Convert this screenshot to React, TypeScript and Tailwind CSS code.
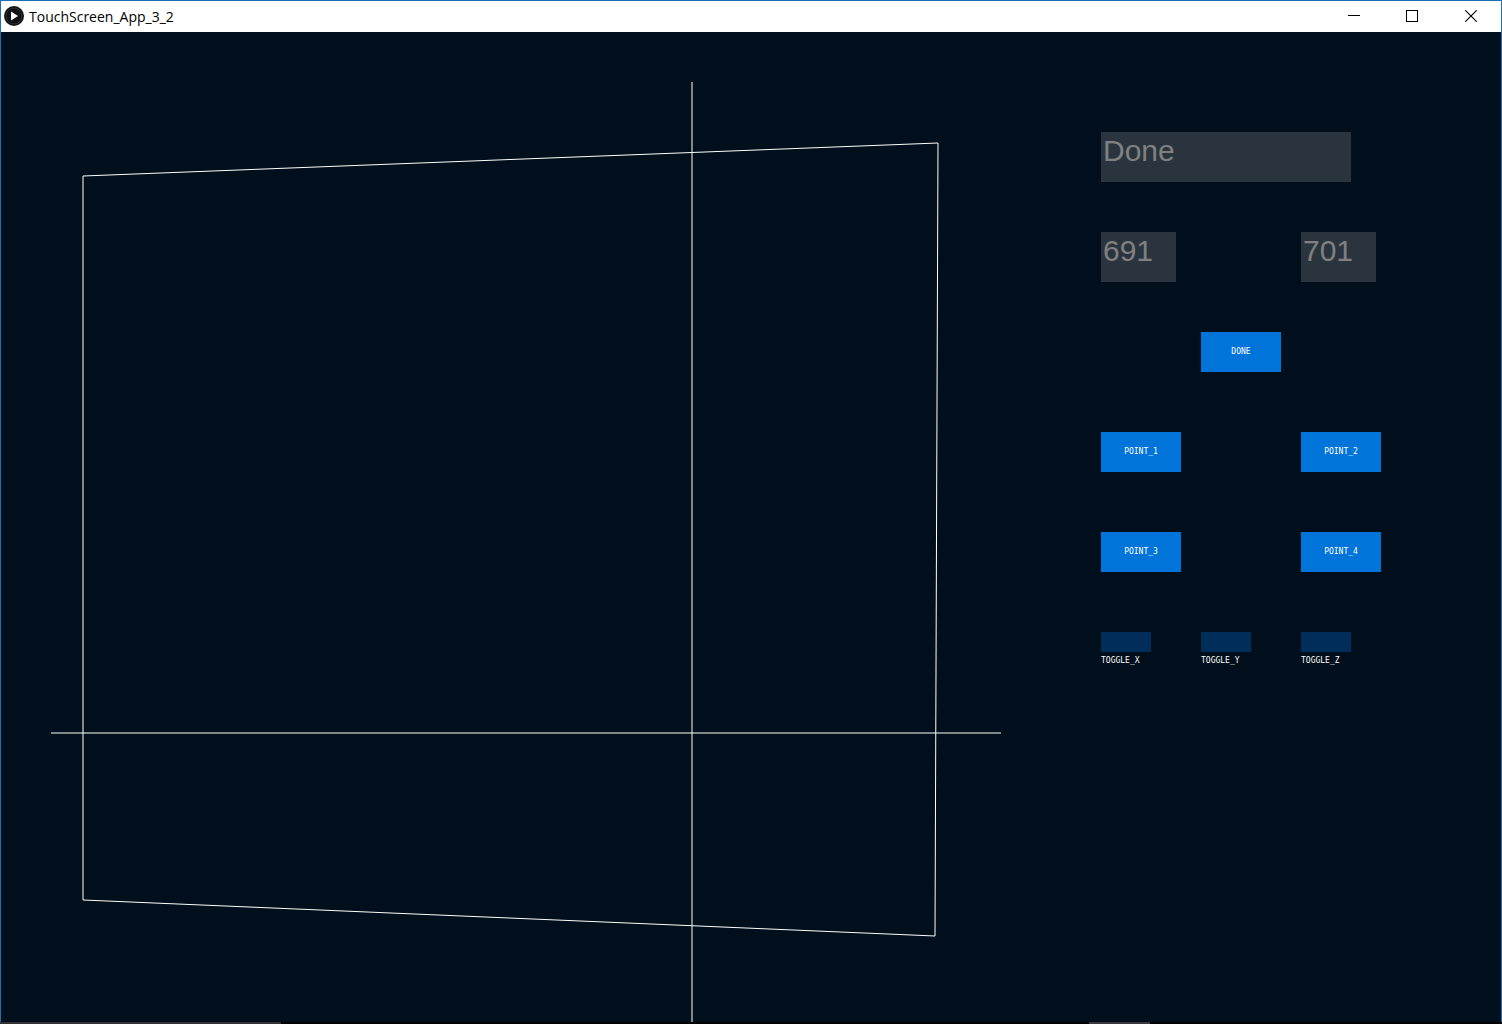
import React from "react";

const labelFont = "font-['DejaVu_Sans_Mono','Liberation_Mono',monospace] text-[8px] leading-[10px] text-white";

function TitleBar() {
  return (
    <header className="flex h-[31px] items-center bg-white text-black">
      <svg className="mb-px ml-[3px] size-5" viewBox="0 0 20 20" aria-hidden="true">
        <circle cx="10" cy="10" r="10" fill="#101214" />
        <circle cx="10" cy="10" r="8" fill="none" stroke="#2b2e30" strokeWidth="1" />
        <path d="M7 5.5 14 10 7 14.5Z" fill="#ffffff" />
      </svg>
      <h1 className="ml-[5px] flex-1 font-['Open_Sans','Noto_Sans',sans-serif] text-[14px] leading-5">
        TouchScreen_App_3_2
      </h1>
      <div className="flex h-full">
        <button type="button" aria-label="Minimize" className="flex w-[58px] items-center justify-center pb-px">
          <svg width="12" height="12" viewBox="0 0 12 12" shapeRendering="crispEdges">
            <path d="M0 5.5H12" stroke="#000" />
          </svg>
        </button>
        <button type="button" aria-label="Maximize" className="flex w-[58px] items-center justify-center pb-px">
          <svg width="12" height="12" viewBox="0 0 12 12" shapeRendering="crispEdges">
            <rect x="0.5" y="0.5" width="11" height="11" fill="none" stroke="#000" />
          </svg>
        </button>
        <button type="button" aria-label="Close" className="flex w-[60px] items-center justify-center pb-px">
          <svg width="12" height="12" viewBox="0 0 12 12">
            <path d="M0.3 0.3 11.7 11.7M11.7 0.3 0.3 11.7" stroke="#000" strokeWidth="1.1" />
          </svg>
        </button>
      </div>
    </header>
  );
}

function TouchArea({ x, y }: { x: number; y: number }) {
  return (
    <svg className="block w-2/3 self-start" viewBox="0 0 1000 990" role="img" aria-label="Touch area">
      <g fill="none" stroke="#ffffff">
        <polygon points="82,144 937,111 934,904 82,868" />
        <path d={`M${x} 50V990M50 ${y}H1000`} />
      </g>
    </svg>
  );
}

function Field({ label, value, className }: { label: string; value: string; className: string }) {
  return (
    <input
      type="text"
      aria-label={label}
      defaultValue={value}
      className={`h-[50px] bg-[#2a343e] px-0.5 pb-3 font-['Liberation_Sans',sans-serif] text-[30px] text-[#808080] outline-none ${className}`}
    />
  );
}

function PanelButton({ label, className = "" }: { label: string; className?: string }) {
  return (
    <button type="button" className={`flex h-10 w-20 items-center justify-center bg-[#0074d9] ${labelFont} ${className}`}>
      {label}
    </button>
  );
}

function Toggle({ label }: { label: string }) {
  return (
    <label className={`flex flex-col items-start gap-1 self-start ${labelFont}`}>
      <input type="checkbox" className="h-5 w-[50px] appearance-none bg-[#002d5a] checked:bg-[#0074d9]" />
      {label}
    </label>
  );
}

export default function App() {
  return (
    <div className="flex min-h-screen flex-col bg-[#010e1b]">
      <div className="flex flex-1 flex-col border-x border-t border-[#1a71b8]">
        <TitleBar />
        <main className="flex flex-1">
          <TouchArea x={691} y={701} />
          <section
            aria-label="Controls"
            className="grid w-1/3 auto-rows-[100px] grid-cols-[100px_100px_100px] content-start items-start pt-[100px] pl-[100px]"
          >
            <Field label="Status" value="Done" className="col-span-3 w-[250px]" />
            <Field label="X position" value="691" className="w-[75px]" />
            <Field label="Y position" value="701" className="col-start-3 w-[75px]" />
            <PanelButton label="DONE" className="col-start-2" />
            <PanelButton label="POINT_1" className="col-start-1" />
            <PanelButton label="POINT_2" className="col-start-3" />
            <PanelButton label="POINT_3" className="col-start-1" />
            <PanelButton label="POINT_4" className="col-start-3" />
            <Toggle label="TOGGLE_X" />
            <Toggle label="TOGGLE_Y" />
            <Toggle label="TOGGLE_Z" />
          </section>
        </main>
      </div>
      <div className="flex h-0.5 bg-black">
        <div className="w-[281px] bg-[#333133]" />
        <div className="flex-1" />
        <div className="mr-[352px] w-[61px] bg-[#3a383b]" />
      </div>
    </div>
  );
}
